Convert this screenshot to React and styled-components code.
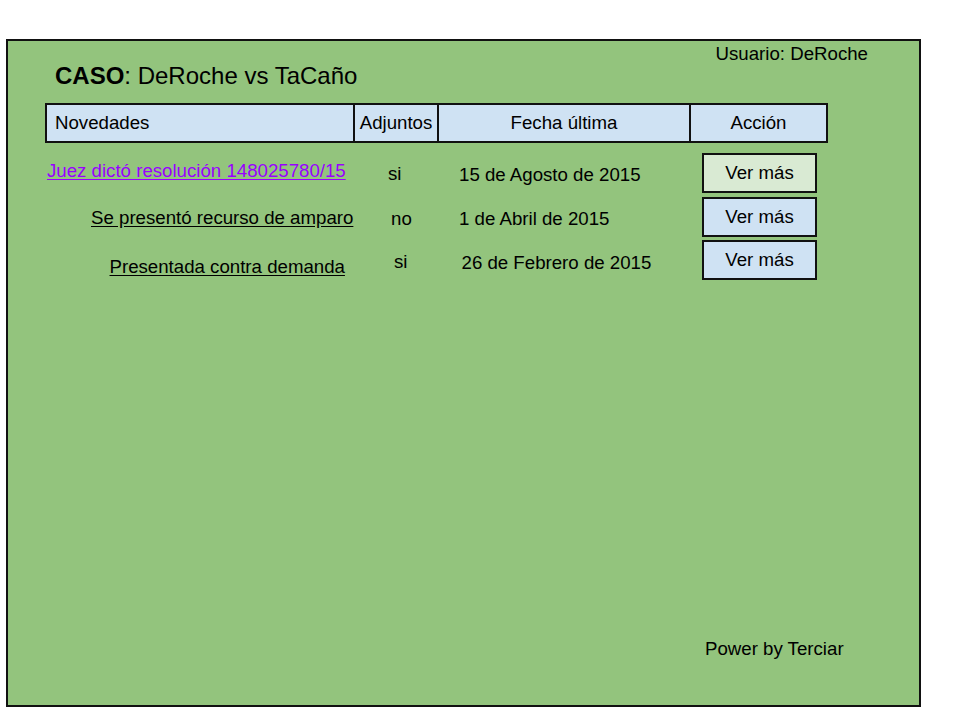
import React from "react";
import styled, { createGlobalStyle } from "styled-components";

const Global = createGlobalStyle`
  html, body { margin: 0; padding: 0; background: #ffffff; }
  body { font-family: "Liberation Sans", Arial, sans-serif; color: #000; }
`;

const Frame = styled.div`
  box-sizing: border-box;
  margin: 39px 0 0 6px;
  width: 915px;
  height: 668px;
  border: 2px solid #111;
  background: #93c47d;
  display: flex;
  flex-direction: column;
  font-size: 18.67px;
  line-height: 22px;
`;

const Header = styled.header`
  box-sizing: border-box;
  height: 49px;
  padding: 2px 51px 0 47px;
  display: flex;
  justify-content: space-between;
`;

const Title = styled.h1`
  align-self: flex-end;
  margin: 0;
  font-size: 24px;
  line-height: 28px;
  font-weight: normal;
  b { font-weight: bold; }
`;

const User = styled.div`
  align-self: flex-start;
`;

const Table = styled.div`
  margin: 13px 0 0 37px;
  display: flex;
  flex-direction: column;
`;

const HeadRow = styled.div`
  display: flex;
  margin-bottom: 10px;
`;

const HeadCell = styled.div`
  box-sizing: border-box;
  width: ${(p) => p.$w}px;
  height: 40px;
  border: 2px solid #111;
  background: #cfe2f3;
  display: flex;
  align-items: center;
  justify-content: ${(p) => (p.$left ? "flex-start" : "center")};
  padding-left: ${(p) => (p.$left ? 8 : 0)}px;
  & + & { margin-left: -2px; }
`;

const Rows = styled.div`
  display: flex;
  flex-direction: column;
  gap: 3.5px;
`;

const Row = styled.div`
  display: grid;
  grid-template-columns: 308px 84px 253px 137px;
  height: 40px;
`;

const Cell = styled.div`
  box-sizing: border-box;
  padding-left: ${(p) => p.$x}px;
  padding-top: ${(p) => p.$y}px;
  white-space: nowrap;
`;

const NewsLink = styled.a`
  color: ${(p) => (p.$visited ? "#9900ff" : "#000")};
  text-decoration: underline;
  text-underline-offset: 2px;
  cursor: pointer;
`;

const ActionButton = styled.button`
  box-sizing: border-box;
  width: 115px;
  height: 40px;
  margin-left: 12px;
  border: 2px solid #111;
  border-radius: 0;
  background: ${(p) => (p.$active ? "#d9ead3" : "#cfe2f3")};
  font-family: "Liberation Sans", Arial, sans-serif;
  font-size: 18.67px;
  line-height: 22px;
  color: #000;
  padding: 0;
  cursor: pointer;
`;

const Footer = styled.footer`
  margin-top: auto;
  padding: 0 0 45px 697px;
`;

const rows = [
  {
    title: "Juez dictó resolución 148025780/15",
    visited: true,
    link: [2, 6.5],
    adj: "si",
    adjPos: [35, 9.5],
    date: "15 de Agosto de 2015",
    datePos: [22, 10.5],
    active: true,
  },
  {
    title: "Se presentó recurso de amparo",
    link: [46, 10.5],
    adj: "no",
    adjPos: [38, 11],
    date: "1 de Abril de 2015",
    datePos: [22, 11.5],
  },
  {
    title: "Presentada contra demanda",
    link: [64.5, 15.5],
    adj: "si",
    adjPos: [41, 10.5],
    date: "26 de Febrero de 2015",
    datePos: [24.5, 11.5],
  },
];

export default function App() {
  return (
    <>
      <Global />
      <Frame>
        <Header>
          <Title>
            <b>CASO</b>: DeRoche vs TaCaño
          </Title>
          <User>Usuario: DeRoche</User>
        </Header>
        <Table>
          <HeadRow>
            <HeadCell $w={310} $left>Novedades</HeadCell>
            <HeadCell $w={86}>Adjuntos</HeadCell>
            <HeadCell $w={254}>Fecha última</HeadCell>
            <HeadCell $w={139}>Acción</HeadCell>
          </HeadRow>
          <Rows>
            {rows.map((r) => (
              <Row key={r.title}>
                <Cell $x={r.link[0]} $y={r.link[1]}>
                  <NewsLink $visited={r.visited}>{r.title}</NewsLink>
                </Cell>
                <Cell $x={r.adjPos[0]} $y={r.adjPos[1]}>{r.adj}</Cell>
                <Cell $x={r.datePos[0]} $y={r.datePos[1]}>{r.date}</Cell>
                <Cell $x={0} $y={0}>
                  <ActionButton $active={r.active}>Ver más</ActionButton>
                </Cell>
              </Row>
            ))}
          </Rows>
        </Table>
        <Footer>Power by Terciar</Footer>
      </Frame>
    </>
  );
}
